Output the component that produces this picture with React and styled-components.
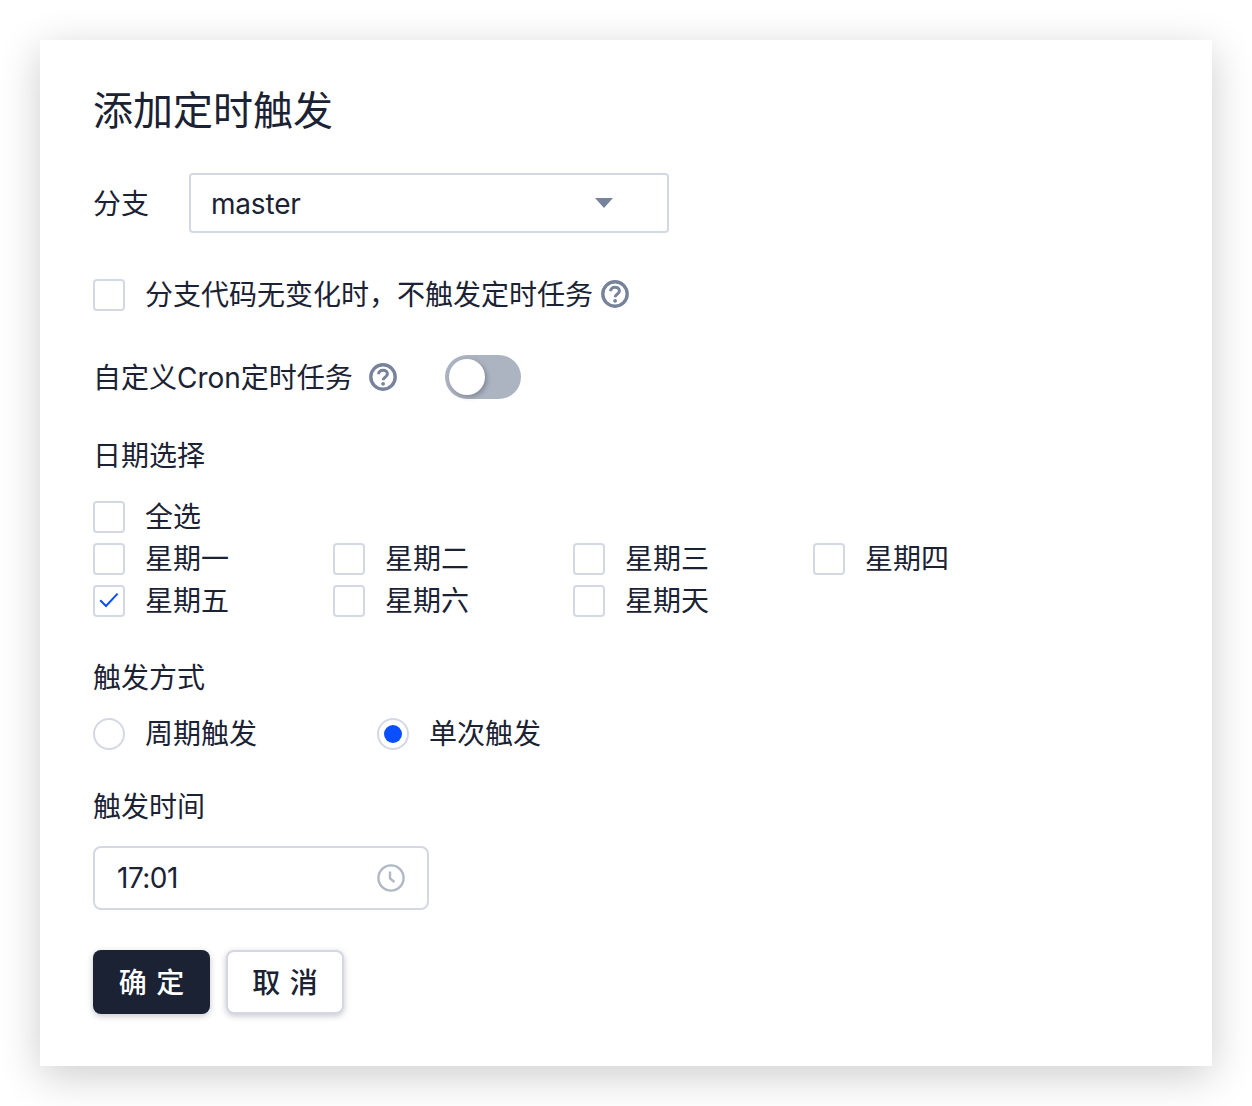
import styled, { createGlobalStyle } from "styled-components";

const GlobalStyle = createGlobalStyle`
  html, body {
    margin: 0;
    padding: 0;
    background: #fff;
  }
  * {
    box-sizing: border-box;
  }
`;

const weekdays = [
  { label: "星期一" },
  { label: "星期二" },
  { label: "星期三" },
  { label: "星期四" },
  { label: "星期五", checked: true },
  { label: "星期六" },
  { label: "星期天" },
];

function HelpIcon() {
  return (
    <svg width="28" height="28" viewBox="0 0 28 28" fill="none">
      <circle cx="14" cy="14" r="12.2" stroke="#77839a" strokeWidth="3.4" />
      <path d="M9.6 11.2c0-2.5 1.9-4 4.4-4s4.4 1.5 4.4 3.7c0 1.7-1 2.5-2.3 3.4-1.2.8-1.9 1.4-1.9 2.9" stroke="#77839a" strokeWidth="3" />
      <circle cx="14.1" cy="20.8" r="1.9" fill="#77839a" />
    </svg>
  );
}

function CheckItem({ label, checked }) {
  return (
    <CheckRow>
      <CheckBox>
        {checked && (
          <svg width="20" height="18" viewBox="0 0 20 18" fill="none">
            <path d="M1.2 8.2 7 14 18.6 1.6" stroke="#0a4fff" strokeWidth="2" />
          </svg>
        )}
      </CheckBox>
      <OptionText>{label}</OptionText>
    </CheckRow>
  );
}

function RadioItem({ label, selected }) {
  return (
    <RadioRow>
      <RadioCircle>{selected && <RadioDot />}</RadioCircle>
      <OptionText>{label}</OptionText>
    </RadioRow>
  );
}

export default function App() {
  return (
    <Page>
      <GlobalStyle />
      <Card>
        <Title>添加定时触发</Title>

        <BranchRow>
          <BranchLabel>分支</BranchLabel>
          <Select>
            <SelectValue>master</SelectValue>
            <Caret />
          </Select>
        </BranchRow>

        <SkipRow>
          <CheckBox />
          <SkipText>分支代码无变化时，不触发定时任务</SkipText>
          <HelpIcon />
        </SkipRow>

        <CronRow>
          <CronText>自定义Cron定时任务</CronText>
          <HelpIcon />
          <Toggle>
            <Knob />
          </Toggle>
        </CronRow>

        <DateLabel>日期选择</DateLabel>
        <CheckItem label="全选" />
        <WeekGrid>
          {weekdays.map((d) => (
            <CheckItem key={d.label} label={d.label} checked={d.checked} />
          ))}
        </WeekGrid>

        <ModeLabel>触发方式</ModeLabel>
        <RadioGroup>
          <RadioItem label="周期触发" />
          <RadioItem label="单次触发" selected />
        </RadioGroup>

        <TimeLabel>触发时间</TimeLabel>
        <TimeInput>
          <TimeValue>17:01</TimeValue>
          <svg width="28" height="28" viewBox="0 0 28 28" fill="none">
            <circle cx="14" cy="14" r="12.6" stroke="#b0b8c6" strokeWidth="2.4" />
            <path d="M13 7.5v7l4.5 3.5" stroke="#b0b8c6" strokeWidth="2.4" />
          </svg>
        </TimeInput>

        <Actions>
          <PrimaryButton>确 定</PrimaryButton>
          <DefaultButton>取 消</DefaultButton>
        </Actions>
      </Card>
    </Page>
  );
}

const Page = styled.div`
  width: 1252px;
  height: 1106px;
  padding: 40px;
  overflow: hidden;
  font-family: Inter, "Noto Sans CJK SC", sans-serif;
  font-size: 28px;
  color: #1a2233;
`;

const Card = styled.div`
  width: 1172px;
  height: 1026px;
  padding: 40px 53px 0;
  background: #fff;
  box-shadow: 0 10px 40px rgba(0, 0, 0, 0.2);
`;

const Title = styled.h1`
  margin: 0;
  height: 60px;
  padding-top: 1px;
  font-size: 40px;
  line-height: 60px;
  font-weight: 400;
`;

const BranchRow = styled.div`
  display: flex;
  align-items: center;
  gap: 40px;
  margin-top: 33px;
  height: 60px;
`;

const BranchLabel = styled.span`
  padding-bottom: 2px;
`;

const Select = styled.div`
  position: relative;
  width: 480px;
  height: 60px;
  display: flex;
  align-items: center;
  padding-left: 20px;
  border: 2px solid #d3d8e4;
  border-radius: 4px;
`;

const SelectValue = styled.span`
  padding-top: 2px;
  letter-spacing: -0.2px;
`;

const Caret = styled.i`
  position: absolute;
  right: 54px;
  top: 23px;
  border-left: 9px solid transparent;
  border-right: 9px solid transparent;
  border-top: 10px solid #77839a;
`;

const SkipRow = styled.div`
  display: flex;
  align-items: center;
  margin-top: 46px;
  height: 32px;

  svg {
    margin-bottom: 2px;
  }
`;

const SkipText = styled.span`
  margin: 0 8px 0 20px;
  padding-bottom: 5px;
`;

const CronRow = styled.div`
  display: flex;
  align-items: center;
  gap: 16px;
  margin-top: 44px;
  height: 44px;
`;

const CronText = styled.span`
  padding-bottom: 2px;
`;

const Toggle = styled.div`
  width: 76px;
  height: 44px;
  margin-left: 32px;
  padding: 4px;
  border-radius: 22px;
  background: #adb4c1;
`;

const Knob = styled.div`
  width: 36px;
  height: 36px;
  border-radius: 50%;
  background: #fff;
  box-shadow: 2px 2px 5px rgba(26, 34, 51, 0.3);
`;

const SectionLabel = styled.div`
  height: 40px;
  line-height: 40px;
`;

const DateLabel = styled(SectionLabel)`
  margin: 37px 0 25px;
`;

const ModeLabel = styled(SectionLabel)`
  margin: 41px 0 20px;
`;

const TimeLabel = styled(SectionLabel)`
  margin: 37px 0 19px;
`;

const CheckRow = styled.div`
  display: flex;
  align-items: center;
  gap: 20px;
  height: 32px;
`;

const OptionText = styled.span`
  padding-bottom: 4px;
`;

const CheckBox = styled.div`
  flex: none;
  width: 32px;
  height: 32px;
  display: flex;
  align-items: center;
  justify-content: center;
  border: 2px solid #d3d8e4;
  border-radius: 4px;
`;

const WeekGrid = styled.div`
  display: grid;
  grid-template-columns: repeat(4, 240px);
  row-gap: 10px;
  margin-top: 10px;
`;

const RadioGroup = styled.div`
  display: grid;
  grid-template-columns: 284px 1fr;
  height: 32px;
`;

const RadioRow = styled(CheckRow)``;

const RadioCircle = styled.div`
  width: 32px;
  height: 32px;
  display: flex;
  align-items: center;
  justify-content: center;
  border: 2px solid #d3d8e4;
  border-radius: 50%;
`;

const RadioDot = styled.div`
  width: 18px;
  height: 18px;
  border-radius: 50%;
  background: #0a4fff;
`;

const TimeInput = styled.div`
  width: 336px;
  height: 64px;
  display: flex;
  align-items: center;
  justify-content: space-between;
  padding: 0 22px;
  border: 2px solid #d3d8e4;
  border-radius: 8px;
`;

const TimeValue = styled.span`
  letter-spacing: -0.5px;
`;

const Button = styled.button`
  height: 64px;
  padding: 0 0 2px;
  border-radius: 8px;
  font-family: inherit;
  font-size: 28px;
  font-weight: 500;
  word-spacing: 2px;
  box-shadow: 0 2px 6px rgba(26, 34, 51, 0.25);
`;

const PrimaryButton = styled(Button)`
  width: 117px;
  border: none;
  background: #1a2233;
  color: #fff;
`;

const DefaultButton = styled(Button)`
  width: 118px;
  border: 2px solid #d3d8e4;
  background: #fff;
  color: #1a2233;
`;

const Actions = styled.div`
  display: flex;
  gap: 16px;
  margin-top: 40px;
`;
